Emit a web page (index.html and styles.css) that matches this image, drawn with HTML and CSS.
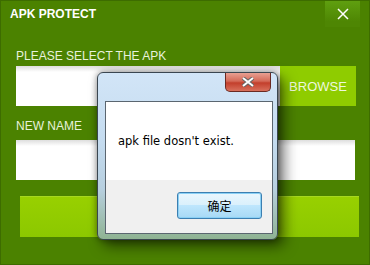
FILE: index.html
```html
<!DOCTYPE html>
<html lang="en">
<head>
  <meta charset="UTF-8" />
  <title>APK PROTECT</title>
  <link rel="stylesheet" href="styles.css">
</head>
<body>
  <div class="app">
    <header class="titlebar">
      <span class="title">APK PROTECT</span>
      <button class="close">
        <svg width="12" height="12" viewBox="0 0 12 12"><path d="M1 1L11 11M11 1L1 11" stroke="#fff" stroke-width="1.5"/></svg>
      </button>
    </header>

    <div class="form">
      <label>PLEASE SELECT THE APK</label>
      <div class="row">
        <input type="text" class="field">
        <button class="browse">BROWSE</button>
      </div>
      <label class="second">NEW NAME</label>
      <input type="text" class="field full">
      <button class="go"></button>
    </div>

    <div class="dialog">
      <button class="dlg-close">
        <svg width="14" height="10" viewBox="0 0 14 10"><path d="M2 1L12 9M12 1L2 9" stroke="#666" stroke-width="4"/><path d="M2 1L12 9M12 1L2 9" stroke="#fff" stroke-width="2"/></svg>
      </button>
      <div class="dlg-body">
        <div class="dlg-msg">apk file dosn't exist.</div>
        <div class="dlg-foot">
          <button class="ok">确定</button>
        </div>
      </div>
    </div>
  </div>
</body>
</html>
```

FILE: styles.css
```css
body {
  margin: 0;
  font-family: 'Liberation Sans', Arial, sans-serif;
}

.app {
  position: relative;
  width: 370px;
  height: 265px;
  box-sizing: border-box;
  background: #4b8200;
  border: 1px solid #3d6c00;
  overflow: hidden;
}

.titlebar {
  display: flex;
  align-items: center;
  justify-content: space-between;
  height: 26px;
  padding: 0 9px 0 9px;
}

.title {
  color: #fff;
  font-weight: bold;
  font-size: 12px;
}

.close {
  width: 35px;
  height: 27px;
  margin-top: -1px;
  border: none;
  padding: 0;
  background: linear-gradient(#60a010, #4e8603 80%);
  display: flex;
  align-items: center;
  justify-content: center;
}

.form {
  display: flex;
  flex-direction: column;
  padding: 22px 13px 0 15px;
}

label {
  color: #e8f2dc;
  font-size: 12px;
  line-height: 14px;
  height: 17px;
}

.second {
  margin-top: 13px;
  height: 21px;
}

.row {
  display: flex;
}

.field {
  box-sizing: border-box;
  height: 40px;
  border: none;
  margin: 0;
  background: linear-gradient(#dedede, #fff 6px);
  width: 264px;
}

.field.full {
  width: 339px;
}

.browse {
  width: 76px;
  height: 40px;
  border: none;
  background: #8fcc00;
  color: #eef8dd;
  font-family: 'Liberation Sans', Arial, sans-serif;
  font-size: 13px;
  padding: 0;
}

.go {
  align-self: flex-start;
  width: 339px;
  height: 41px;
  margin: 16px 0 0 4px;
  border: none;
  background: linear-gradient(#98d000, #8cc800);
  border-top: 1px solid #a6d820;
}

.dialog {
  position: absolute;
  left: 96px;
  top: 71px;
  width: 181px;
  height: 168px;
  box-sizing: border-box;
  border: 1px solid #3a4650;
  border-radius: 6px;
  background: linear-gradient(#d2e5f7, #c5dcf0 40%, #b7cfdf 70%, #8fb393);
  box-shadow: 6px 6px 14px rgba(0, 0, 0, 0.55), 0 0 6px rgba(0, 0, 0, 0.4);
}

.dlg-close {
  position: absolute;
  left: 127px;
  top: 0;
  width: 46px;
  height: 19px;
  padding: 0;
  border: 1px solid #6b2a22;
  border-top: none;
  border-radius: 0 0 5px 5px;
  background: linear-gradient(#e8a092, #d46a58 45%, #c33f2c 55%, #d8705c);
  display: flex;
  align-items: center;
  justify-content: center;
}

.dlg-body {
  position: absolute;
  left: 7px;
  top: 28px;
  width: 168px;
  height: 133px;
  box-sizing: border-box;
  border: 1px solid #5b6670;
  background: #f0f0f0;
  display: flex;
  flex-direction: column;
}

.dlg-msg {
  height: 78px;
  background: #fff;
  font-family: 'DejaVu Sans', sans-serif;
  font-size: 11.5px;
  color: #000;
  padding: 32px 0 0 12px;
  box-sizing: border-box;
}

.dlg-foot {
  display: flex;
  justify-content: flex-end;
  padding: 12px 10px 0 0;
}

.ok {
  width: 85px;
  height: 27px;
  border: 1px solid #3c7fb1;
  border-radius: 3px;
  background: linear-gradient(#eaf6fd, #d9f0fc 50%, #bee6fd 50%, #a7d9f5);
  box-shadow: inset 0 0 0 1px #8ad0f5;
  font-family: 'Noto Sans CJK SC', sans-serif;
  font-size: 12px;
  color: #000;
  padding: 0;
}
```
